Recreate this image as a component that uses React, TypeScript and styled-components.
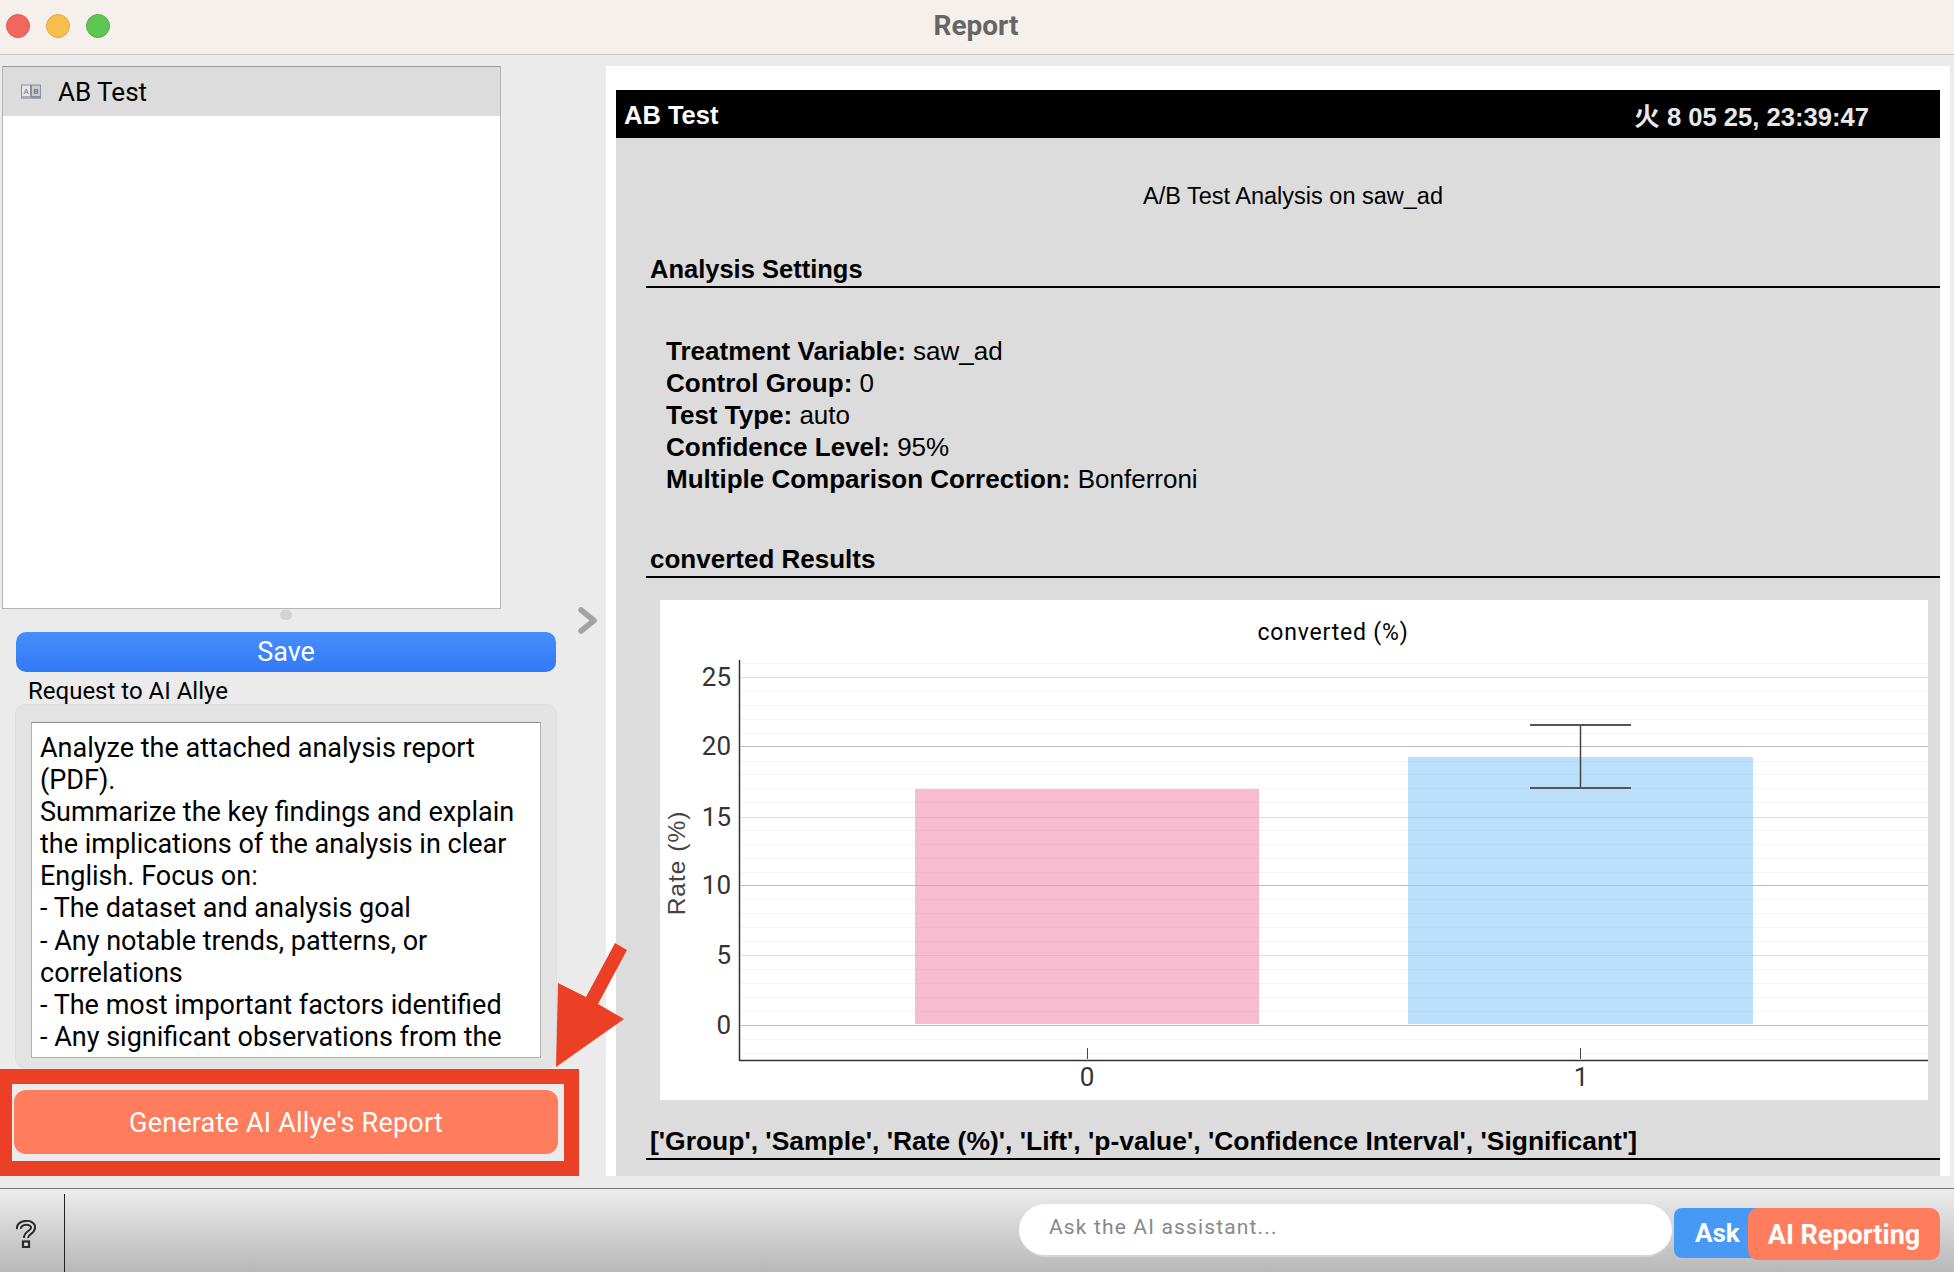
import React from "react";
import styled, { createGlobalStyle } from "styled-components";

const UI_FONT = `Roboto, "Noto Sans CJK JP", sans-serif`;
const REPORT_FONT = `"Liberation Sans", "Noto Sans CJK JP", Arial, sans-serif`;

const GlobalStyle = createGlobalStyle`
    html, body {
        margin: 0;
        padding: 0;
        background: #ebebeb;
    }

    * {
        box-sizing: border-box;
    }
`;

const Window = styled.div`
    width: 1954px;
    height: 1272px;
    display: flex;
    flex-direction: column;
    overflow: hidden;
    background: #ebebeb;
    font-family: ${UI_FONT};
`;

const TitleBar = styled.div`
    height: 55px;
    flex: none;
    display: flex;
    align-items: center;
    position: relative;
    justify-content: center;
    background: #f5f0eb;
    border-bottom: 1px solid #c8c6c4;
`;

const Lights = styled.div`
    position: absolute;
    left: 6px;
    top: 14px;
    display: flex;
    gap: 16px;
`;

const Light = styled.span<{ color: string; edge: string }>`
    width: 24px;
    height: 24px;
    border-radius: 50%;
    background: ${props => props.color};
    border: 1px solid ${props => props.edge};
`;

const WindowTitle = styled.div`
    font-size: 28px;
    font-weight: 700;
    color: #666;
    margin-top: -4px;
    margin-left: -2px;
`;

const Main = styled.div`
    height: 1133px;
    flex: none;
    display: flex;
    padding-top: 11px;
`;

const LeftPane = styled.div`
    width: 572px;
    flex: none;
    display: flex;
    flex-direction: column;
`;

const ListPane = styled.div`
    width: 499px;
    height: 543px;
    flex: none;
    margin-left: 2px;
    background: #fff;
    border: 1px solid #b4b4b4;
    border-top-color: #999;
`;

const ListRow = styled.div`
    height: 49px;
    display: flex;
    align-items: center;
    gap: 17px;
    padding-left: 18px;
    background: #dcdcdc;
    font-size: 26px;
    color: #000;
`;

const SplitHandle = styled.div`
    height: 23px;
    flex: none;
    display: flex;
    align-items: center;
    justify-content: center;
`;

const HandleDot = styled.span`
    width: 12px;
    height: 10px;
    margin-bottom: 11px;
    border-radius: 5px;
    background: #d2d2d2;
`;

const SaveButton = styled.div`
    width: 540px;
    height: 40px;
    flex: none;
    margin-left: 16px;
    display: flex;
    align-items: center;
    justify-content: center;
    border-radius: 10px;
    background: linear-gradient(#468ffc, #3478f6);
    color: #fff;
    font-size: 27px;
`;

const RequestLabel = styled.div`
    height: 32px;
    flex: none;
    padding: 6px 0 0 28px;
    display: flex;
    align-items: center;
    font-size: 24px;
    color: #000;
`;

const RequestGroup = styled.div`
    width: 542px;
    height: 364px;
    flex: none;
    margin-left: 15px;
    padding: 17px 17px 11px 15px;
    border-radius: 10px;
    background: #e3e3e3;
    border: 1px solid #dedede;
`;

const RequestText = styled.div`
    width: 510px;
    height: 336px;
    padding: 9px 2px 0 8px;
    overflow: hidden;
    background: #fff;
    border: 1px solid #b2b2b2;
    border-top-color: #8e8e8e;
    font-size: 27px;
    line-height: 32.1px;
    color: #000;
    white-space: pre-line;
`;

const GenerateWrap = styled.div`
    position: relative;
    width: 544px;
    height: 64px;
    flex: none;
    margin: 22px 0 0 14px;
`;

const GenerateButton = styled.div`
    height: 100%;
    padding-top: 1px;
    display: flex;
    align-items: center;
    justify-content: center;
    border-radius: 12px;
    background: #ff7d5c;
    color: #fff;
    font-size: 27px;
    letter-spacing: 0.2px;
`;

const Callout = styled.div`
    position: absolute;
    left: -17px;
    top: -21px;
    width: 582px;
    height: 107px;
    border: 15px solid #eb4026;
    pointer-events: none;
`;

const CalloutArrow = styled.svg`
    position: absolute;
    left: 540px;
    top: -150px;
    width: 90px;
    height: 130px;
    overflow: visible;
`;

const ChevronGutter = styled.div`
    width: 34px;
    flex: none;
    padding: 541px 0 0 6px;
`;

const ReportFrame = styled.div`
    width: 1344px;
    height: 1110px;
    flex: none;
    padding: 24px 10px 0;
    background: #fff;
`;

const Report = styled.div`
    height: 100%;
    overflow: hidden;
    background: #dcdcdc;
    font-family: ${REPORT_FONT};
    color: #000;
`;

const ReportBar = styled.div`
    height: 48px;
    display: flex;
    align-items: center;
    justify-content: space-between;
    padding: 0 71px 0 8px;
    background: #000;
    font-weight: 700;
`;

const ReportName = styled.div`
    font-size: 25.5px;
    color: #fff;
    margin-top: 2px;
`;

const ReportDate = styled.div`
    font-size: 25.6px;
    color: #e8e8e8;
    margin-top: 1px;
`;

const ReportSubtitle = styled.div`
    margin-top: 42px;
    padding-left: 30px;
    text-align: center;
    font-size: 23.5px;
    line-height: 32px;
`;

const SectionHeading = styled.div<{ gap: number; size: number }>`
    margin: ${props => props.gap}px 0 0 30px;
    padding: 0 0 1px 4px;
    border-bottom: 2px solid #000;
    font-size: ${props => props.size}px;
    font-weight: 700;
    line-height: 32px;
    white-space: nowrap;
`;

const SettingsList = styled.div`
    margin-top: 47px;
    padding-left: 50px;
    font-size: 26px;
    line-height: 32px;

    b {
        font-weight: 700;
    }
`;

const ChartCard = styled.div`
    width: 1268px;
    height: 500px;
    margin: 22px 0 0 44px;
    background: #fff;
`;

const ChartSvg = styled.svg`
    display: block;
    font-family: ${UI_FONT};
`;

const Footer = styled.div`
    height: 84px;
    flex: none;
    display: flex;
    align-items: stretch;
    position: relative;
    border-top: 1px solid #777;
    background: linear-gradient(#ececec, #b8b8b8);
`;

const HelpSlot = styled.div`
    width: 64px;
    flex: none;
    display: flex;
    align-items: center;
    padding: 6px 0 0 15px;
`;

const FooterDivider = styled.div`
    width: 1px;
    margin-top: 5px;
    background: #222;
`;

const AskRow = styled.div`
    margin-left: auto;
    display: flex;
    align-items: flex-start;
    padding: 15px 14px 0 0;
`;

const AskInput = styled.div`
    width: 653px;
    height: 53px;
    display: flex;
    align-items: center;
    padding: 0 0 5px 30px;
    border-radius: 27px;
    background: #fff;
    border-bottom: 2px solid #d6d6d6;
    color: #888;
    font-size: 21px;
    letter-spacing: 1.15px;
`;

const AskButton = styled.div`
    width: 96px;
    height: 50px;
    margin: 4px 0 0 2px;
    padding-left: 21px;
    display: flex;
    align-items: center;
    border-radius: 8px;
    background: #4899f6;
    color: #fff;
    font-size: 26px;
    font-weight: 700;
`;

const ReportingButton = styled.div`
    width: 192px;
    height: 52px;
    margin: 4px 0 0 -22px;
    padding-top: 1px;
    display: flex;
    align-items: center;
    justify-content: center;
    border-radius: 10px;
    background: #ff7d5c;
    color: #fff;
    font-size: 27px;
    font-weight: 700;
`;

const minorTicks = [663, 691, 705, 719, 733, 761, 774, 788, 802, 830, 844, 858, 872, 899, 913, 927, 941, 969, 983, 997, 1011, 1039, 1053];
const majorTicks = [
    { label: "25", y: 677, stroke: "#dedede" },
    { label: "20", y: 746, stroke: "#bdbdbd" },
    { label: "15", y: 817, stroke: "#dedede" },
    { label: "10", y: 885, stroke: "#bdbdbd" },
    { label: "5", y: 955, stroke: "#dedede" },
    { label: "0", y: 1025, stroke: "#bdbdbd" },
];

const requestText = `Analyze the attached analysis report
(PDF).
Summarize the key findings and explain
the implications of the analysis in clear
English. Focus on:
- The dataset and analysis goal
- Any notable trends, patterns, or
correlations
- The most important factors identified
- Any significant observations from the`;

// chart coordinates below are page coords, the viewBox shifts them into the card
function RateChart() {
    return (
        <ChartSvg width={1268} height={500} viewBox="660 600 1268 500">
            <text x={1333} y={640} textAnchor="middle" fontSize={23} letterSpacing={0.8} fill="#000">converted (%)</text>
            {minorTicks.map(y => (
                <line key={y} x1={741} x2={1928} y1={y + 0.5} y2={y + 0.5} stroke="#f3f3f3" />
            ))}
            {majorTicks.map(t => (
                <g key={t.label}>
                    <line x1={741} x2={1928} y1={t.y + 0.5} y2={t.y + 0.5} stroke={t.stroke} strokeWidth={1.2} />
                    <text x={731} y={t.y + 9} textAnchor="end" fontSize={26} fill="#333">{t.label}</text>
                </g>
            ))}
            <rect x={915} y={789} width={344} height={235} fill="#f48fb1" fillOpacity={0.6} />
            <rect x={1408} y={757} width={345} height={267} fill="#90caf9" fillOpacity={0.6} />
            <line x1={1580.5} x2={1580.5} y1={725} y2={788} stroke="#444" strokeWidth={1.5} />
            <line x1={1530} x2={1631} y1={725} y2={725} stroke="#555" strokeWidth={2} />
            <line x1={1530} x2={1631} y1={788} y2={788} stroke="#555" strokeWidth={2} />
            <line x1={739.5} x2={739.5} y1={660} y2={1061} stroke="#333" strokeWidth={1.5} />
            <line x1={739} x2={1928} y1={1060.5} y2={1060.5} stroke="#333" strokeWidth={1.5} />
            <line x1={1087.5} x2={1087.5} y1={1048} y2={1059} stroke="#444" />
            <line x1={1580.5} x2={1580.5} y1={1048} y2={1059} stroke="#444" />
            <text x={1087} y={1086} textAnchor="middle" fontSize={26} fill="#333">0</text>
            <text x={1581} y={1086} textAnchor="middle" fontSize={26} fill="#333">1</text>
            <text
                transform="translate(685 863) rotate(-90)"
                textAnchor="middle"
                fontSize={24.5}
                letterSpacing={1}
                fontFamily={REPORT_FONT}
                fill="#444"
            >
                Rate (%)
            </text>
        </ChartSvg>
    );
}

function AbIcon() {
    return (
        <svg width="20" height="16" viewBox="0 0 20 16">
            <rect x="0.5" y="1" width="9" height="13" fill="#e4e6ea" stroke="#8a8f99" />
            <rect x="10.5" y="1" width="9" height="13" fill="#c9ccd2" stroke="#8a8f99" />
            <rect x="10.5" y="12" width="9" height="2.5" fill="#8a8f99" />
            <rect x="0.5" y="12" width="9" height="2.5" fill="#a6aab2" />
            <text x="5" y="10" textAnchor="middle" fontSize="8" fill="#6b7079" fontFamily="Roboto, sans-serif">A</text>
            <text x="15" y="10" textAnchor="middle" fontSize="8" fill="#555a63" fontFamily="Roboto, sans-serif">B</text>
        </svg>
    );
}

function HelpIcon() {
    return (
        <svg width="22" height="28" viewBox="0 0 22 28" fill="none">
            <path d="M4 9 C3 1 19 1 18 8 C17.5 13 11 12 11 18" stroke="#2a2a2a" strokeWidth="6" />
            <path d="M4 9 C3 1 19 1 18 8 C17.5 13 11 12 11 18" stroke="#dcdcdc" strokeWidth="2" />
            <rect x="8" y="21.5" width="6" height="5.5" fill="#dcdcdc" stroke="#2a2a2a" strokeWidth="2.2" />
        </svg>
    );
}

export default function App() {
    return (
        <Window>
            <GlobalStyle />
            <TitleBar>
                <Lights>
                    <Light color="#f1675f" edge="#dd5a52" />
                    <Light color="#f6c04f" edge="#e2a73f" />
                    <Light color="#5fc653" edge="#50b045" />
                </Lights>
                <WindowTitle>Report</WindowTitle>
            </TitleBar>
            <Main>
                <LeftPane>
                    <ListPane>
                        <ListRow>
                            <AbIcon />
                            AB Test
                        </ListRow>
                    </ListPane>
                    <SplitHandle><HandleDot /></SplitHandle>
                    <SaveButton>Save</SaveButton>
                    <RequestLabel>Request to AI Allye</RequestLabel>
                    <RequestGroup>
                        <RequestText>{requestText}</RequestText>
                    </RequestGroup>
                    <GenerateWrap>
                        <GenerateButton>Generate AI Allye's Report</GenerateButton>
                        <Callout />
                        <CalloutArrow viewBox="554 940 90 130">
                            <path
                                d="M615 943 L627 950 L598 1004 L624 1019 L556 1067 L558 983 L586 997 Z"
                                fill="#eb4026"
                            />
                        </CalloutArrow>
                    </GenerateWrap>
                </LeftPane>
                <ChevronGutter>
                    <svg width="20" height="27" viewBox="0 0 20 27" fill="none">
                        <path d="M3 3 L16 13.5 L3 24" stroke="#a3a3a3" strokeWidth="5.5" strokeLinejoin="round" strokeLinecap="round" />
                    </svg>
                </ChevronGutter>
                <ReportFrame>
                    <Report>
                        <ReportBar>
                            <ReportName>AB Test</ReportName>
                            <ReportDate>火 8 05 25, 23:39:47</ReportDate>
                        </ReportBar>
                        <ReportSubtitle>A/B Test Analysis on saw_ad</ReportSubtitle>
                        <SectionHeading gap={41} size={25.5}>Analysis Settings</SectionHeading>
                        <SettingsList>
                            <div><b>Treatment Variable:</b> saw_ad</div>
                            <div><b>Control Group:</b> 0</div>
                            <div><b>Test Type:</b> auto</div>
                            <div><b>Confidence Level:</b> 95%</div>
                            <div><b>Multiple Comparison Correction:</b> Bonferroni</div>
                        </SettingsList>
                        <SectionHeading gap={48} size={26}>converted Results</SectionHeading>
                        <ChartCard>
                            <RateChart />
                        </ChartCard>
                        <SectionHeading gap={25} size={26.45}>
                            ['Group', 'Sample', 'Rate (%)', 'Lift', 'p-value', 'Confidence Interval', 'Significant']
                        </SectionHeading>
                    </Report>
                </ReportFrame>
            </Main>
            <Footer>
                <HelpSlot><HelpIcon /></HelpSlot>
                <FooterDivider />
                <AskRow>
                    <AskInput>Ask the AI assistant...</AskInput>
                    <AskButton>Ask</AskButton>
                    <ReportingButton>AI Reporting</ReportingButton>
                </AskRow>
            </Footer>
        </Window>
    );
}
